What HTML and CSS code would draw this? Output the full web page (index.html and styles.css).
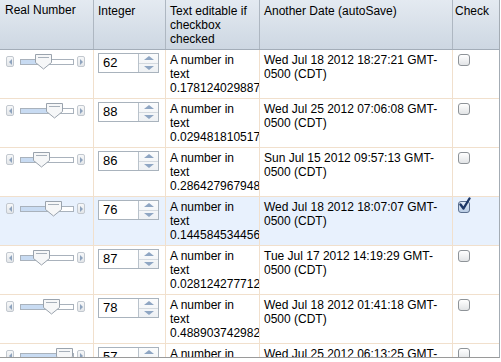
FILE: index.html
```html
<!DOCTYPE html>
<html>
<head>
<meta charset="utf-8">
<link rel="stylesheet" href="styles.css">
</head>
<body>
<div class="grid">
  <div class="row head">
    <div class="cell c1">Real Number</div>
    <div class="cell">Integer</div>
    <div class="cell">Text editable if checkbox checked</div>
    <div class="cell">Another Date (autoSave)</div>
    <div class="cell last">Check</div>
  </div>

  <div class="row">
    <div class="cell c1"><div class="slider"><span class="sbtn"><span class="tri-l"></span></span><span class="track"><span class="fill" style="width:22px"></span><svg class="thumb" style="left:14px" width="17" height="16" viewBox="0 0 17 16"><path d="M0.5 0.5H16.5V8.5L8.5 15L0.5 8.5Z" fill="#f6f7f8" stroke="#9aa3ad"/><path d="M3 3.5H14" stroke="#a7b0ba"/></svg></span><span class="sbtn r"><span class="tri-r"></span></span></div></div>
    <div class="cell"><div class="spin"><span class="val">62</span><span class="arrows"><span class="up"></span><span class="dn"></span></span></div></div>
    <div class="cell">A number in text 0.17812402988712345</div>
    <div class="cell">Wed Jul 18 2012 18:27:21 GMT-<wbr>0500 (CDT)</div>
    <div class="cell last"><span class="cb"></span></div>
  </div>

  <div class="row">
    <div class="cell c1"><div class="slider"><span class="sbtn"><span class="tri-l"></span></span><span class="track"><span class="fill" style="width:33px"></span><svg class="thumb" style="left:25px" width="17" height="16" viewBox="0 0 17 16"><path d="M0.5 0.5H16.5V8.5L8.5 15L0.5 8.5Z" fill="#f6f7f8" stroke="#9aa3ad"/><path d="M3 3.5H14" stroke="#a7b0ba"/></svg></span><span class="sbtn r"><span class="tri-r"></span></span></div></div>
    <div class="cell"><div class="spin"><span class="val">88</span><span class="arrows"><span class="up"></span><span class="dn"></span></span></div></div>
    <div class="cell">A number in text 0.02948181051712345</div>
    <div class="cell">Wed Jul 25 2012 07:06:08 GMT-<wbr>0500 (CDT)</div>
    <div class="cell last"><span class="cb"></span></div>
  </div>

  <div class="row">
    <div class="cell c1"><div class="slider"><span class="sbtn"><span class="tri-l"></span></span><span class="track"><span class="fill" style="width:20px"></span><svg class="thumb" style="left:12px" width="17" height="16" viewBox="0 0 17 16"><path d="M0.5 0.5H16.5V8.5L8.5 15L0.5 8.5Z" fill="#f6f7f8" stroke="#9aa3ad"/><path d="M3 3.5H14" stroke="#a7b0ba"/></svg></span><span class="sbtn r"><span class="tri-r"></span></span></div></div>
    <div class="cell"><div class="spin"><span class="val">86</span><span class="arrows"><span class="up"></span><span class="dn"></span></span></div></div>
    <div class="cell">A number in text 0.28642796794812345</div>
    <div class="cell">Sun Jul 15 2012 09:57:13 GMT-<wbr>0500 (CDT)</div>
    <div class="cell last"><span class="cb"></span></div>
  </div>

  <div class="row sel">
    <div class="cell c1"><div class="slider"><span class="sbtn"><span class="tri-l"></span></span><span class="track"><span class="fill" style="width:32px"></span><svg class="thumb" style="left:24px" width="17" height="16" viewBox="0 0 17 16"><path d="M0.5 0.5H16.5V8.5L8.5 15L0.5 8.5Z" fill="#f6f7f8" stroke="#9aa3ad"/><path d="M3 3.5H14" stroke="#a7b0ba"/></svg></span><span class="sbtn r"><span class="tri-r"></span></span></div></div>
    <div class="cell"><div class="spin"><span class="val">76</span><span class="arrows"><span class="up"></span><span class="dn"></span></span></div></div>
    <div class="cell">A number in text 0.14458453445612345</div>
    <div class="cell">Wed Jul 18 2012 18:07:07 GMT-<wbr>0500 (CDT)</div>
    <div class="cell last"><span class="cb on"><svg class="check" width="14" height="15" viewBox="0 0 14 15"><path d="M2.5 7.5L5.5 11.5L11.5 1.5" fill="none" stroke="#1d3766" stroke-width="2.4" stroke-linecap="round" stroke-linejoin="round"/></svg></span></div>
  </div>

  <div class="row">
    <div class="cell c1"><div class="slider"><span class="sbtn"><span class="tri-l"></span></span><span class="track"><span class="fill" style="width:20px"></span><svg class="thumb" style="left:12px" width="17" height="16" viewBox="0 0 17 16"><path d="M0.5 0.5H16.5V8.5L8.5 15L0.5 8.5Z" fill="#f6f7f8" stroke="#9aa3ad"/><path d="M3 3.5H14" stroke="#a7b0ba"/></svg></span><span class="sbtn r"><span class="tri-r"></span></span></div></div>
    <div class="cell"><div class="spin"><span class="val">87</span><span class="arrows"><span class="up"></span><span class="dn"></span></span></div></div>
    <div class="cell">A number in text 0.02812427771212345</div>
    <div class="cell">Tue Jul 17 2012 14:19:29 GMT-<wbr>0500 (CDT)</div>
    <div class="cell last"><span class="cb"></span></div>
  </div>

  <div class="row">
    <div class="cell c1"><div class="slider"><span class="sbtn"><span class="tri-l"></span></span><span class="track"><span class="fill" style="width:30px"></span><svg class="thumb" style="left:22px" width="17" height="16" viewBox="0 0 17 16"><path d="M0.5 0.5H16.5V8.5L8.5 15L0.5 8.5Z" fill="#f6f7f8" stroke="#9aa3ad"/><path d="M3 3.5H14" stroke="#a7b0ba"/></svg></span><span class="sbtn r"><span class="tri-r"></span></span></div></div>
    <div class="cell"><div class="spin"><span class="val">78</span><span class="arrows"><span class="up"></span><span class="dn"></span></span></div></div>
    <div class="cell">A number in text 0.48890374298212345</div>
    <div class="cell">Wed Jul 18 2012 01:41:18 GMT-<wbr>0500 (CDT)</div>
    <div class="cell last"><span class="cb"></span></div>
  </div>

  <div class="row">
    <div class="cell c1"><div class="slider"><span class="sbtn"><span class="tri-l"></span></span><span class="track"><span class="fill" style="width:43px"></span><svg class="thumb" style="left:35px" width="17" height="16" viewBox="0 0 17 16"><path d="M0.5 0.5H16.5V8.5L8.5 15L0.5 8.5Z" fill="#f6f7f8" stroke="#9aa3ad"/><path d="M3 3.5H14" stroke="#a7b0ba"/></svg></span><span class="sbtn r"><span class="tri-r"></span></span></div></div>
    <div class="cell"><div class="spin"><span class="val">57</span><span class="arrows"><span class="up"></span><span class="dn"></span></span></div></div>
    <div class="cell">A number in text 0.63512874431212345</div>
    <div class="cell">Wed Jul 25 2012 06:13:25 GMT-<wbr>0500 (CDT)</div>
    <div class="cell last"><span class="cb"></span></div>
  </div>
</div>
</body>
</html>
```

FILE: styles.css
```css
html, body {
  margin: 0;
  padding: 0;
  background: #fff;
}
body {
  font-family: "Liberation Sans", Arial, Helvetica, sans-serif;
  font-size: 12px;
  line-height: 14px;
  color: #000;
}
.grid {
  width: 500px;
  height: 358px;
  box-sizing: border-box;
  border-right: 1px solid #a4acb4;
  border-bottom: 1px solid #9a9a9a;
  overflow: hidden;
}
.row {
  display: grid;
  grid-template-columns: 94px 72px 94px 193px 46px;
  height: 49px;
  box-sizing: border-box;
  border-bottom: 1px solid #f1e0cd;
}
.row.sel {
  background: #e8f1fd;
}
.row.head {
  height: 50px;
  background: linear-gradient(#e4eaf1, #cdd7e2);
  border-bottom: 1px solid #a3adb8;
}
.cell {
  box-sizing: border-box;
  border-right: 1px solid #f1e0cd;
  padding: 3px 4px;
  overflow: hidden;
  min-width: 0;
}
.head .cell {
  border-right: 1px solid #aeb7c1;
  padding: 4px 4px 3px 4px;
}
.head .cell.c1 {
  padding-left: 5px;
}
.cell.last {
  border-right: none;
  padding: 4px 5px;
}
.head .cell.last {
  padding: 4px 2px 3px 2px;
}
.cell.c1 {
  padding: 3px 0 3px 6px;
}

/* slider */
.slider {
  display: flex;
  align-items: flex-start;
  margin-top: 3px;
}
.sbtn {
  width: 8px;
  height: 11px;
  box-sizing: border-box;
  border: 1px solid #c2c8cf;
  border-radius: 2px;
  background: linear-gradient(#f7f8f9, #e3e6e9);
  display: flex;
  align-items: center;
  justify-content: center;
}
.sbtn.r {
  margin-left: 3px;
}
.tri-l {
  width: 0;
  height: 0;
  border-top: 3px solid transparent;
  border-bottom: 3px solid transparent;
  border-right: 3px solid #8ea3be;
}
.tri-r {
  width: 0;
  height: 0;
  border-top: 3px solid transparent;
  border-bottom: 3px solid transparent;
  border-left: 3px solid #8ea3be;
}
.track {
  position: relative;
  margin-left: 6px;
  margin-top: 3px;
  width: 54px;
  height: 6px;
  box-sizing: border-box;
  border: 1px solid #a9b2bc;
  background: #fff;
}
.fill {
  display: block;
  height: 100%;
  background: #c8dbf2;
}
.thumb {
  position: absolute;
  top: -6px;
}

/* spinner */
.spin {
  display: flex;
  width: 61px;
  height: 20px;
  box-sizing: border-box;
  border: 1px solid #a9b3bd;
  background: #fff;
}
.val {
  flex: 1;
  padding-left: 4px;
  font-size: 13px;
  line-height: 18px;
}
.arrows {
  width: 19px;
  border-left: 1px solid #b9c2cb;
  display: flex;
  flex-direction: column;
  background: linear-gradient(#fbfcfd, #eef1f4);
}
.up, .dn {
  flex: 1;
  display: flex;
  align-items: center;
  justify-content: center;
}
.up {
  border-bottom: 1px solid #d3d9df;
}
.up::after {
  content: "";
  border-left: 5px solid transparent;
  border-right: 5px solid transparent;
  border-bottom: 4px solid #8fa6c3;
}
.dn::after {
  content: "";
  border-left: 5px solid transparent;
  border-right: 5px solid transparent;
  border-top: 4px solid #8fa6c3;
}

/* checkbox */
.cb {
  position: relative;
  display: block;
  width: 12px;
  height: 12px;
  box-sizing: border-box;
  border: 1px solid #8e9398;
  border-radius: 3px;
  background: linear-gradient(#ffffff, #e2e4e6);
}
.cb.on {
  border-color: #5b6f8e;
  background: linear-gradient(#e3ecf7, #b9cce4);
}
.check {
  position: absolute;
  left: -1px;
  top: -5px;
}
```
